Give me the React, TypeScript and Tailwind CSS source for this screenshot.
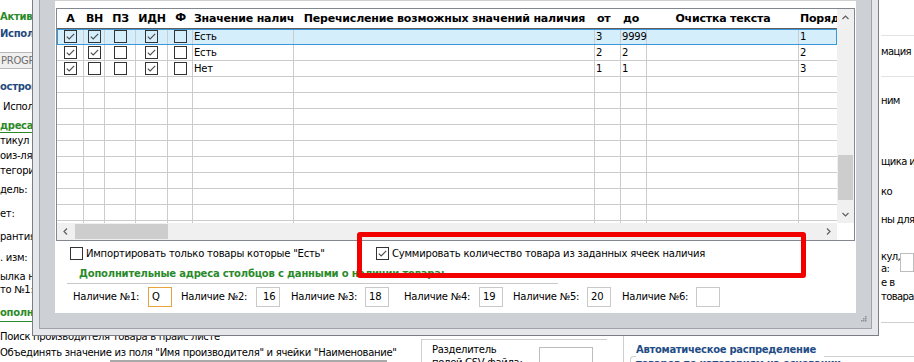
import React from "react";

function Check({ checked }: { checked?: boolean }) {
  return (
    <svg width="13" height="13" viewBox="0 0 13 13" className="block shrink-0">
      <rect x="0.5" y="0.5" width="12" height="12" fill="none" stroke="#333333" />
      {checked && (
        <polyline points="2.8,6.6 5.2,9 10.2,3.8" fill="none" stroke="#4a4a4a" strokeWidth="1.1" />
      )}
    </svg>
  );
}

function Chevron({ dir }: { dir: "up" | "down" | "left" | "right" }) {
  const pts: Record<string, string> = {
    up: "1.5,6 4.5,3 7.5,6",
    down: "1.5,3 4.5,6 7.5,3",
    left: "6,1.5 3,4.5 6,7.5",
    right: "3,1.5 6,4.5 3,7.5",
  };
  return (
    <svg width="9" height="9" viewBox="0 0 9 9" className="block">
      <polyline points={pts[dir]} fill="none" stroke="#606060" strokeWidth="1.2" />
    </svg>
  );
}

const COLS = [
  "w-[27px]",
  "w-[21px]",
  "w-[31px]",
  "w-[32px]",
  "w-[25px]",
  "w-[101px]",
  "w-[301px]",
  "w-[26px]",
  "w-[26px]",
  "w-[152px]",
  "w-[38px]",
];

type RowData = { c: number[]; v: string; a: string; b: string; o: string; sel?: boolean };

const ROWS: RowData[] = [
  { c: [1, 1, 0, 1, 0], v: "Есть", a: "3", b: "9999", o: "1", sel: true },
  { c: [1, 1, 0, 1, 0], v: "Есть", a: "2", b: "2", o: "2" },
  { c: [1, 0, 0, 1, 0], v: "Нет", a: "1", b: "1", o: "3" },
];

function Row({ r }: { r?: RowData }) {
  const cell = "h-full shrink-0 border-r border-[#cccccc] flex items-center whitespace-nowrap";
  const texts = r ? [r.v, "", r.a, r.b, "", r.o] : ["", "", "", "", "", ""];
  return (
    <div
      className={`h-[16px] shrink-0 flex border-b border-[#cccccc] ${
        r?.sel ? "bg-[#d5eefb] outline outline-[#3b97d8] -outline-offset-1" : ""
      }`}
    >
      {COLS.slice(0, 5).map((w, i) => (
        <div key={i} className={`${w} ${cell} justify-center`}>
          {r && <Check checked={r.c[i] === 1} />}
        </div>
      ))}
      {COLS.slice(5).map((w, i) => (
        <div key={i + 5} className={`${w} ${cell} pl-[1px] ${i === 5 ? "border-r-0" : ""}`}>
          {texts[i]}
        </div>
      ))}
    </div>
  );
}

function Grid() {
  const empty = Array.from({ length: 10 });
  const h = "h-full shrink-0 flex items-center overflow-hidden whitespace-nowrap";
  return (
    <div className="mx-[1px] h-[233px] flex flex-col border border-[#828790]">
      <div className="flex h-[214px]">
        <div className="w-[780px] flex flex-col overflow-hidden">
          <div className="h-[20px] shrink-0 flex border-b border-[#5e5e5e] font-bold text-[11px]">
            <div className={`w-[27px] ${h} justify-center`}>А</div>
            <div className={`w-[21px] ${h} justify-center`}>ВН</div>
            <div className={`w-[31px] ${h} justify-center`}>ПЗ</div>
            <div className={`w-[32px] ${h} justify-center`}>ИДН</div>
            <div className={`w-[25px] ${h} justify-center pb-[2px]`}>Ф</div>
            <div className={`w-[101px] ${h} pl-[1px]`}>Значение наличия</div>
            <div className={`w-[301px] ${h} justify-center`}>Перечисление возможных значений наличия</div>
            <div className={`w-[26px] ${h} pl-[2px]`}>от</div>
            <div className={`w-[26px] ${h} pl-[2px]`}>до</div>
            <div className={`w-[152px] ${h} justify-center`}>Очистка текста</div>
            <div className={`w-[38px] ${h} pl-[1px]`}>Порядок</div>
          </div>
          {ROWS.map((r, i) => (
            <Row key={i} r={r} />
          ))}
          {empty.map((_, i) => (
            <Row key={"e" + i} />
          ))}
        </div>
        <div className="w-[17px] flex flex-col bg-[#f0f0f0]">
          <div className="h-[17px] flex items-center justify-center">
            <Chevron dir="up" />
          </div>
          <div className="flex-1 flex flex-col">
            <div className="mt-[129px] mx-[1px] h-[45px] bg-[#cdcdcd]" />
          </div>
          <div className="h-[17px] flex items-center justify-center">
            <Chevron dir="down" />
          </div>
        </div>
      </div>
      <div className="flex h-[17px]">
        <div className="w-[780px] flex bg-[#f0f0f0]">
          <div className="w-[17px] flex items-center justify-center">
            <Chevron dir="left" />
          </div>
          <div className="flex-1 flex items-center">
            <div className="ml-[1px] w-[93px] h-[15px] bg-[#cdcdcd]" />
          </div>
          <div className="w-[17px] flex items-center justify-center">
            <Chevron dir="right" />
          </div>
        </div>
        <div className="w-[17px] bg-white" />
      </div>
    </div>
  );
}

function Field({ label, value, lw, ml, active, pad }: { label: string; value: string; lw: string; ml: string; active?: boolean; pad?: string }) {
  return (
    <div className={`flex items-center ${ml}`}>
      <div className={`${lw} whitespace-nowrap`}>{label}</div>
      <div
        className={`w-[24px] h-[20px] border ${pad ?? "pl-[3px]"} leading-[18px] ${
          active ? "border-[#e8a33d] bg-white" : "border-[#c9c9c9] bg-white"
        }`}
      >
        {value}
      </div>
    </div>
  );
}

function Client() {
  return (
    <div className="flex-1 flex flex-col bg-white border-t border-[#d0d0d0] pt-[7px]">
      <Grid />
      <div className="mt-[6px] h-[13px] flex items-center pl-[15px] whitespace-nowrap">
        <div className="w-[306px] flex items-center">
          <Check />
          <span className="ml-[3px]">Импортировать только товары которые "Есть"</span>
        </div>
        <div className="flex items-center">
          <Check checked />
          <span className="ml-[3px]">Суммировать количество товара из заданных ячеек наличия</span>
        </div>
      </div>
      <div className="mt-[6px] ml-[12px] w-[491px] h-[18px] pt-[1px] pl-[12px] border-b border-[#c8c8c8] font-bold text-[#2a8a2a] leading-[14px] whitespace-nowrap">
        Дополнительные адреса столбцов с данными о наличии товара:
      </div>
      <div className="mt-[3px] h-[20px] flex items-center pl-[18px]">
        <Field label="Наличие №1:" value="Q" lw="w-[75px]" ml="" active />
        <Field label="Наличие №2:" value="16" lw="w-[75px]" ml="ml-[9px]" pad="pl-[6px]" />
        <Field label="Наличие №3:" value="18" lw="w-[74px]" ml="ml-[11px]" />
        <Field label="Наличие №4:" value="19" lw="w-[75px]" ml="ml-[15px]" />
        <Field label="Наличие №5:" value="20" lw="w-[74px]" ml="ml-[10px]" />
        <Field label="Наличие №6:" value="" lw="w-[74px]" ml="ml-[11px]" />
      </div>
    </div>
  );
}

function Dialog() {
  return (
    <div className="absolute left-[32px] top-0 w-[847px] h-[336px] flex border-x border-b border-[#7b7f85] bg-[#e5e7ea] px-[6px] pb-[6px]">
      <div className="flex-1 flex border-x border-b border-[#a0a4aa] bg-[#cdd1d6] px-[15px] pb-[15px]">
        <Client />
      </div>
      <svg width="6" height="6" viewBox="0 0 6 6" className="absolute right-[11px] bottom-[13px]">
        <rect x="4" y="0" width="1.5" height="1.5" fill="#8c9096" />
        <rect x="2" y="2" width="1.5" height="1.5" fill="#8c9096" />
        <rect x="4" y="2" width="1.5" height="1.5" fill="#8c9096" />
        <rect x="0" y="4" width="1.5" height="1.5" fill="#8c9096" />
        <rect x="2" y="4" width="1.5" height="1.5" fill="#8c9096" />
        <rect x="4" y="4" width="1.5" height="1.5" fill="#8c9096" />
      </svg>
    </div>
  );
}

function Background() {
  const green = "font-bold text-[#2a8a2a]";
  const blue = "font-bold text-[#1f4a80]";
  return (
    <div className="flex flex-col tracking-[-0.3px]">
      <div className="flex h-[331px]">
        <div className="w-[420px] flex flex-col pt-[9px] whitespace-nowrap">
          <div className={`h-[16px] leading-[16px] ${green}`}>Активность</div>
          <div className={`h-[18px] leading-[18px] ${blue}`}>Использовать</div>
          <div className="h-[34px] flex items-center">
            <div className="-ml-[2px] w-[80px] h-[17px] border border-[#b9b9b9] bg-[#f0f0f0] text-[#6f6f6f] leading-[15px] pl-[2px]">
              PROGRAM
            </div>
          </div>
          <div className={`h-[20px] leading-[20px] ${blue}`}>остройки</div>
          <div className="h-[19px] leading-[19px] pl-[3px]">Использовать</div>
          <div className={`h-[17px] pt-[3px] leading-[13px] border-b border-[#2a8a2a] w-[60px] ${green}`}>дреса</div>
          <div className="h-[16px] leading-[16px]">тикул</div>
          <div className="h-[13px] leading-[13px]">оиз-ля</div>
          <div className="h-[18px] leading-[18px]">тегории</div>
          <div className="h-[20px] leading-[20px]">дель:</div>
          <div className="h-[28px] leading-[28px]">ет:</div>
          <div className="h-[18px] leading-[18px]">рантия:</div>
          <div className="h-[24px] leading-[24px]">. изм:</div>
          <div className="h-[13px] leading-[13px]">ылка на</div>
          <div className="h-[14px] leading-[14px]">то №1:</div>
          <div className={`h-[25px] pt-[8px] leading-[16px] border-b border-[#2a8a2a] w-[60px] ${green}`}>ополнительно</div>
        </div>
        <div className="flex-1" />
        <div className="w-[34px] flex flex-col whitespace-nowrap overflow-hidden pl-[1px] tracking-[-0.6px]">
          <div className="h-[36px] shrink-0 border-b border-[#e3e3e3]" />
          <div className="mt-[8px] h-[16px] leading-[16px]">мация</div>
          <div className="mt-[16px] h-[1px] bg-[#e3e3e3]" />
          <div className="mt-[16px] h-[16px] leading-[16px]">ним</div>
          <div className="mt-[45px] h-[16px] leading-[16px]">щика и</div>
          <div className="mt-[14px] h-[16px] leading-[16px]">ко</div>
          <div className="mt-[12px] h-[16px] leading-[16px]">ны для</div>
          <div className="mt-[23px] h-[24px] flex">
            <div className="w-[22px] leading-[12px]">
              кул,
              <br />
              а:
            </div>
            <div className="mt-[2px] w-[20px] h-[19px] border border-[#bdbdbd]" />
          </div>
          <div className="mt-[1px] leading-[14px]">
            е в
            <br />
            товара
          </div>
          <div className="mt-[18px] h-[1px] bg-[#cfcfcf]" />
        </div>
      </div>
      <div className="flex h-[31px]">
        <div className="w-[421px] flex flex-col whitespace-nowrap">
          <div className="h-[12px] leading-[12px]">Поиск производителя товара в прайс листе</div>
          <div className="h-[17px] pt-[3px] leading-[14px]">Объединять значение из поля "Имя производителя" и ячейки "Наименование"</div>
          <div className="ml-[110px] w-[277px] h-[10px] border border-[#a9a9a9]" />
        </div>
        <div className="w-[202px] flex">
          <div className="w-[186px] mt-[8px] border-l border-t border-[#cfcfcf] flex">
            <div className="pl-[10px] pt-[3px] leading-[13px] whitespace-nowrap">
              Разделитель
              <br />
              полей CSV файла:
            </div>
            <div className="ml-auto mr-[14px] mt-[7px] w-[54px] h-[19px] border border-[#bdbdbd]" />
          </div>
        </div>
        <div className="flex-1 border-l border-[#cfcfcf] pl-[6px] pt-[12px] flex flex-col whitespace-nowrap">
          <div className="h-[14px] flex">
            <div className="w-[6px] h-[20px] mt-[13px] border-l border-t border-[#cfcfcf] rounded-tl-[4px]" />
            <div className="leading-[14px] font-bold text-[#1f4d86]">Автоматическое распределение</div>
            <div className="flex-1 ml-[8px] mt-[13px] border-t border-[#cfcfcf]" />
          </div>
          <div className="pl-[6px] leading-[13px] font-bold text-[#1f4d86]">товаров по категориям на основании</div>
        </div>
      </div>
    </div>
  );
}

export default function App() {
  return (
    <div className="relative w-[914px] h-[362px] overflow-hidden bg-white text-[10px] leading-none tracking-[-0.2px] text-black font-['DejaVu_Sans',sans-serif]">
      <Background />
      <Dialog />
      <div className="absolute left-[357px] top-[232px] w-[449px] h-[46px] rounded-[3px] border-[5px] border-[#f20000]" />
    </div>
  );
}
